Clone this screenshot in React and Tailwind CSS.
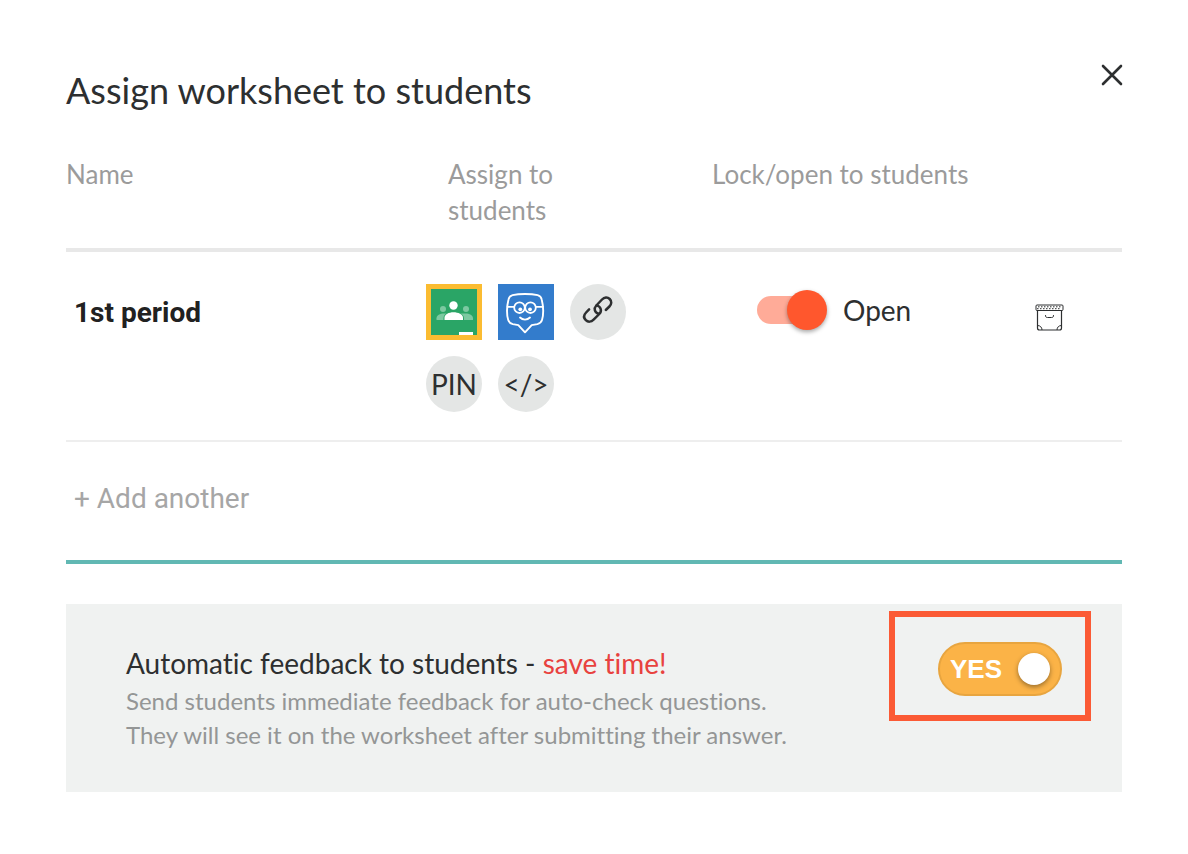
import { useState } from 'react';

function CloseIcon() {
  return (
    <svg viewBox="0 0 20 20" className="w-5 h-5 overflow-visible" fill="none" stroke="#2d2f30" strokeWidth="2.6" strokeLinecap="round">
      <path d="M1 1l18 18M19 1L1 19" />
    </svg>
  );
}

function ClassroomIcon() {
  return (
    <svg viewBox="0 0 56 56" className="w-14 h-14">
      <path fill="#fbbc31" d="M0 0h56v56H0z" />
      <path fill="#2aa566" d="M5 5h46v46H5z" />
      <g fill="#7cc9a1">
        <circle cx="17" cy="25" r="3" />
        <circle cx="40" cy="25" r="3" />
        <path d="M10.500 36v-1.800c0-3 3.500-4.700 7.500-4.700h21.500c4 0 7.500 1.700 7.500 4.700V36z" />
      </g>
      <path fill="#2aa566" d="M17.500 36v-2c0-2.500 2-4.500 4.500-5.500h11c2.500 1 5 3 5 5.500v2z" />
      <g fill="#fff">
        <circle cx="27.500" cy="21.500" r="4.200" />
        <path d="M18.500 36v-2.200c0-3.300 4.300-5.500 9-5.500s9.500 2.200 9.500 5.500V36z" />
        <path d="M33 48h14v3H33z" />
      </g>
    </svg>
  );
}

function EdmodoIcon() {
  return (
    <svg viewBox="0 0 56 56" className="w-14 h-14" fill="none" stroke="#fff" strokeLinecap="round" strokeLinejoin="round">
      <path fill="#337ccc" stroke="none" d="M0 0h56v56H0z" />
      <path strokeWidth="1.900" d="M27 10c-4.500 0-8.800.3-12.400 1.100-2.300.6-3.600 2-4.100 4.300-.9 3.500-1.500 7.500-1.500 11.400 0 3.800.4 6.800 1.200 9.200.8 2.500 2.300 3.600 4.600 4.100l5.500 1 6.700 7.200 6.700-7.200 5.700-1c2.300-.5 3.800-1.600 4.600-4.100.8-2.400 1.200-5.400 1.200-9.200 0-3.900-.6-7.900-1.500-11.400-.5-2.300-1.800-3.700-4.100-4.300C36 10.300 31.500 10 27 10z" />
      <g strokeWidth="1.800">
        <circle cx="21.500" cy="23.700" r="5.300" />
        <circle cx="32.500" cy="23.700" r="5.300" />
        <path d="M9.500 22.800h6.500M38 22.800h7M22 33.500c2.800 2.700 7.200 2.700 10 0" />
      </g>
      <g fill="#fff" stroke="none">
        <circle cx="22.300" cy="25.300" r="1.900" />
        <circle cx="32" cy="25.300" r="1.900" />
      </g>
    </svg>
  );
}

function LinkIcon() {
  return (
    <svg viewBox="0 0 56 56" className="w-14 h-14" fill="none" stroke="#2d2f30" strokeWidth="2.500" strokeLinecap="round">
      <path d="M28.500 29.800c-4-1.200-5-5.400-2.200-8.300l5.700-6c2.400-2.500 5.500-2.700 7.700-.5s2 5.200-.3 7.500l-3.600 3.500" />
      <path d="M26.800 21.400c4.200 1.200 5.400 5.600 2.500 8.600l-5.700 5.700c-2.400 2.400-5.600 2.600-7.800.4s-2-5.200.3-7.600l3-3.100" />
    </svg>
  );
}

function ArchiveIcon() {
  return (
    <svg viewBox="0 0 30 28" className="w-[30px] h-7" fill="none" stroke="#2d2f30">
      <rect x="1" y="1" width="27" height="5.500" rx="1" strokeWidth="1" />
      <path strokeWidth="1" strokeDasharray="1.500 1.500" d="M3 2.800h24M2 4.700h24" />
      <path strokeWidth="1.200" d="M2.500 6.500V24c0 1.500.6 2 2 2h20c1.400 0 2-.5 2-2V6.500" />
      <path strokeWidth="1" d="M2.500 21.500c2.700 0 4.500 1.800 4.500 4.500M26.500 21.500c-2.700 0-4.500 1.800-4.500 4.500" />
      <path strokeWidth="1" strokeLinecap="round" d="M10.500 11.500c0 1.500.5 2 2 2h4c1.500 0 2-.5 2-2" />
    </svg>
  );
}

const roundButton = 'w-14 h-14 rounded-full bg-[#e4e6e5] flex items-center justify-center text-[28px] whitespace-nowrap cursor-pointer';

export default function App() {
  const [open, setOpen] = useState(true);
  const [feedback, setFeedback] = useState(true);

  return (
    <div className="bg-white px-[66px] pt-16 pb-16 font-['Lato',sans-serif] text-[#2d2f30] [font-variant-ligatures:none]">
      <header className="flex items-start justify-between">
        <h1 className="pt-[2px] text-[36px] leading-[48px]">Assign worksheet to students</h1>
        <button type="button" aria-label="Close" className="pt-px cursor-pointer">
          <CloseIcon />
        </button>
      </header>

      <table className="w-full mt-[42px] table-fixed border-collapse text-left">
        <thead>
          <tr className="align-top text-[26px] leading-9 text-[#9b9b9b] border-b-4 border-[#e8e8e8]">
            <th className="w-[360px] pb-5 font-normal">Name</th>
            <th className="w-[25%] pl-[22px] pr-24 pb-5 font-normal">Assign to students</th>
            <th className="w-[25%] pl-[22px] pb-5 font-normal whitespace-nowrap">Lock/open to students</th>
            <th aria-label="Archive"></th>
          </tr>
        </thead>
        <tbody>
          <tr className="align-top border-b-2 border-[#eeeeee]">
            <td className="pt-[41px] pl-2 font-['Roboto',sans-serif] font-bold text-[28px] leading-10 text-[#212121]">1st period</td>
            <td className="pt-8 pb-7">
              <div className="flex flex-wrap gap-4 pr-10">
                <button type="button" aria-label="Google Classroom" className="cursor-pointer"><ClassroomIcon /></button>
                <button type="button" aria-label="Edmodo" className="cursor-pointer"><EdmodoIcon /></button>
                <button type="button" aria-label="Copy link" className={roundButton}><LinkIcon /></button>
                <button type="button" className={roundButton}>PIN</button>
                <button type="button" aria-label="Embed" className={roundButton}>&lt;/&gt;</button>
              </div>
            </td>
            <td className="pt-[38px] pl-[67px]">
              <label className="flex items-center gap-5 text-[28px] leading-10 cursor-pointer">
                <input type="checkbox" role="switch" checked={open} onChange={e => setOpen(e.target.checked)} className="sr-only" />
                <span className={`flex items-center w-[66px] h-7 rounded-full ${open ? 'justify-end bg-[#ffab98]' : 'justify-start bg-gray-300'}`}>
                  <span className={`shrink-0 w-10 h-10 rounded-full shadow-[0_2px_4px_rgba(0,0,0,0.35)] ${open ? '-mr-1 bg-[#ff572d]' : '-ml-1 bg-white'}`} />
                </span>
                {open ? 'Open' : 'Locked'}
              </label>
            </td>
            <td className="pt-[52px] pl-[81px]">
              <button type="button" aria-label="Archive class" className="block cursor-pointer"><ArchiveIcon /></button>
            </td>
          </tr>
        </tbody>
      </table>

      <div className="pt-[37px] pb-[41px] pl-2 border-b-4 border-[#61b8b3]">
        <button type="button" className="block font-['Roboto',sans-serif] text-[28px] leading-10 text-[#a6a6a6] cursor-pointer">
          + Add another
        </button>
      </div>

      <section className="mt-10 pl-[60px] pr-[31px] pt-[7px] pb-10 flex items-start justify-between bg-[#f0f2f1]">
        <div className="pt-[34px]">
          <h2 className="text-[28px] leading-9">
            Automatic feedback to students - <span className="text-[#e8423f]">save time!</span>
          </h2>
          <p className="mt-[3px] text-[24px] leading-[34px] text-[#949696]">
            Send students immediate feedback for auto-check questions.
            <br />
            They will see it on the worksheet after submitting their answer.
          </p>
        </div>
        <div className="shrink-0 pl-[43px] pr-[23px] pt-[25px] pb-[19px] border-6 border-[#fb5a35]">
          <label className={`flex items-center justify-between w-[124px] h-[54px] px-[10px] rounded-full border-2 text-white cursor-pointer ${feedback ? 'border-[#e8a53f] bg-[#fbb347]' : 'flex-row-reverse border-gray-400 bg-gray-300'}`}>
            <input
              type="checkbox"
              role="switch"
              aria-label="Automatic feedback to students"
              checked={feedback}
              onChange={e => setFeedback(e.target.checked)}
              className="sr-only"
            />
            <span className="font-['Liberation_Sans',Arial,sans-serif] font-bold text-[26px]">{feedback ? 'YES' : 'NO'}</span>
            <span className="w-8 h-8 rounded-full bg-white shadow-[0_2px_5px_rgba(0,0,0,0.4)]" />
          </label>
        </div>
      </section>
    </div>
  );
}
